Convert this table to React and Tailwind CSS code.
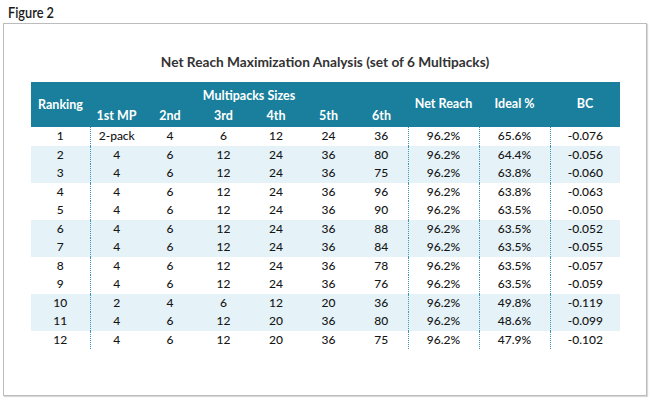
const rows = [
  [1, '2-pack', 4, 6, 12, 24, 36, '96.2%', '65.6%', '-0.076'],
  [2, 4, 6, 12, 24, 36, 80, '96.2%', '64.4%', '-0.056'],
  [3, 4, 6, 12, 24, 36, 75, '96.2%', '63.8%', '-0.060'],
  [4, 4, 6, 12, 24, 36, 96, '96.2%', '63.8%', '-0.063'],
  [5, 4, 6, 12, 24, 36, 90, '96.2%', '63.5%', '-0.050'],
  [6, 4, 6, 12, 24, 36, 88, '96.2%', '63.5%', '-0.052'],
  [7, 4, 6, 12, 24, 36, 84, '96.2%', '63.5%', '-0.055'],
  [8, 4, 6, 12, 24, 36, 78, '96.2%', '63.5%', '-0.057'],
  [9, 4, 6, 12, 24, 36, 76, '96.2%', '63.5%', '-0.059'],
  [10, 2, 4, 6, 12, 20, 36, '96.2%', '49.8%', '-0.119'],
  [11, 4, 6, 12, 20, 36, 80, '96.2%', '48.6%', '-0.099'],
  [12, 4, 6, 12, 20, 36, 75, '96.2%', '47.9%', '-0.102'],
];

// columns that start with a dotted divider
const dividers = [1, 7, 8, 9];

export default function App() {
  return (
    <div className="w-[650px] h-[400px] bg-white text-[#151515]" style={{ fontFamily: 'Lato, "Open Sans", sans-serif' }}>
      <div className="h-[23px] pl-[8px] pt-[4px] text-[15px] leading-[16px] text-[#1a1a1a]">
        <span className="inline-block origin-left scale-x-[0.85] font-semibold">Figure 2</span>
      </div>
      <div className="mx-[3px] h-[373px] border border-[#bcbcbc] shadow-[1px_1px_1px_rgba(0,0,0,0.15)]">
        <div className="mt-[28px] mb-[10px] h-[20px] text-center text-[13.7px] leading-[20px] font-bold text-[#333]">
          Net Reach Maximization Analysis (set of 6 Multipacks)
        </div>
        <table className="ml-[27px] w-[589px] table-fixed border-collapse text-center text-[12px]">
          <colgroup>
            <col className="w-[59px]" />
            <col className="w-[53px]" />
            <col className="w-[54px]" />
            <col className="w-[53px]" />
            <col className="w-[52px]" />
            <col className="w-[53px]" />
            <col className="w-[53px]" />
            <col className="w-[71px]" />
            <col className="w-[71px]" />
            <col className="w-[70px]" />
          </colgroup>
          <thead className="bg-[#197f9c] text-white text-[12.5px]">
            <tr className="h-[22px]">
              <th rowSpan={2} className="font-bold pt-[2px]">Ranking</th>
              <th colSpan={6} className="font-bold pt-[5px] leading-[16px]">Multipacks Sizes</th>
              <th rowSpan={2} className="font-bold">Net Reach</th>
              <th rowSpan={2} className="font-bold">Ideal %</th>
              <th rowSpan={2} className="font-bold">BC</th>
            </tr>
            <tr className="h-[23px]">
              {['1st MP', '2nd', '3rd', '4th', '5th', '6th'].map((h) => (
                <th key={h} className="font-bold leading-[16px]">{h}</th>
              ))}
            </tr>
          </thead>
          <tbody className="font-medium">
            {rows.map((r, i) => {
              const shaded = Math.floor((i + 1) / 2) % 2 === 1;
              return (
                <tr key={i} className={`h-[18.5px] ${shaded ? 'bg-[#e5f2f8]' : 'bg-white'}`}>
                  {r.map((v, j) => (
                    <td
                      key={j}
                      className={`p-0 leading-[18px] ${dividers.includes(j) ? 'border-l border-dotted border-[#3b97b3]' : ''}`}
                    >
                      {v}
                    </td>
                  ))}
                </tr>
              );
            })}
          </tbody>
        </table>
      </div>
    </div>
  );
}
